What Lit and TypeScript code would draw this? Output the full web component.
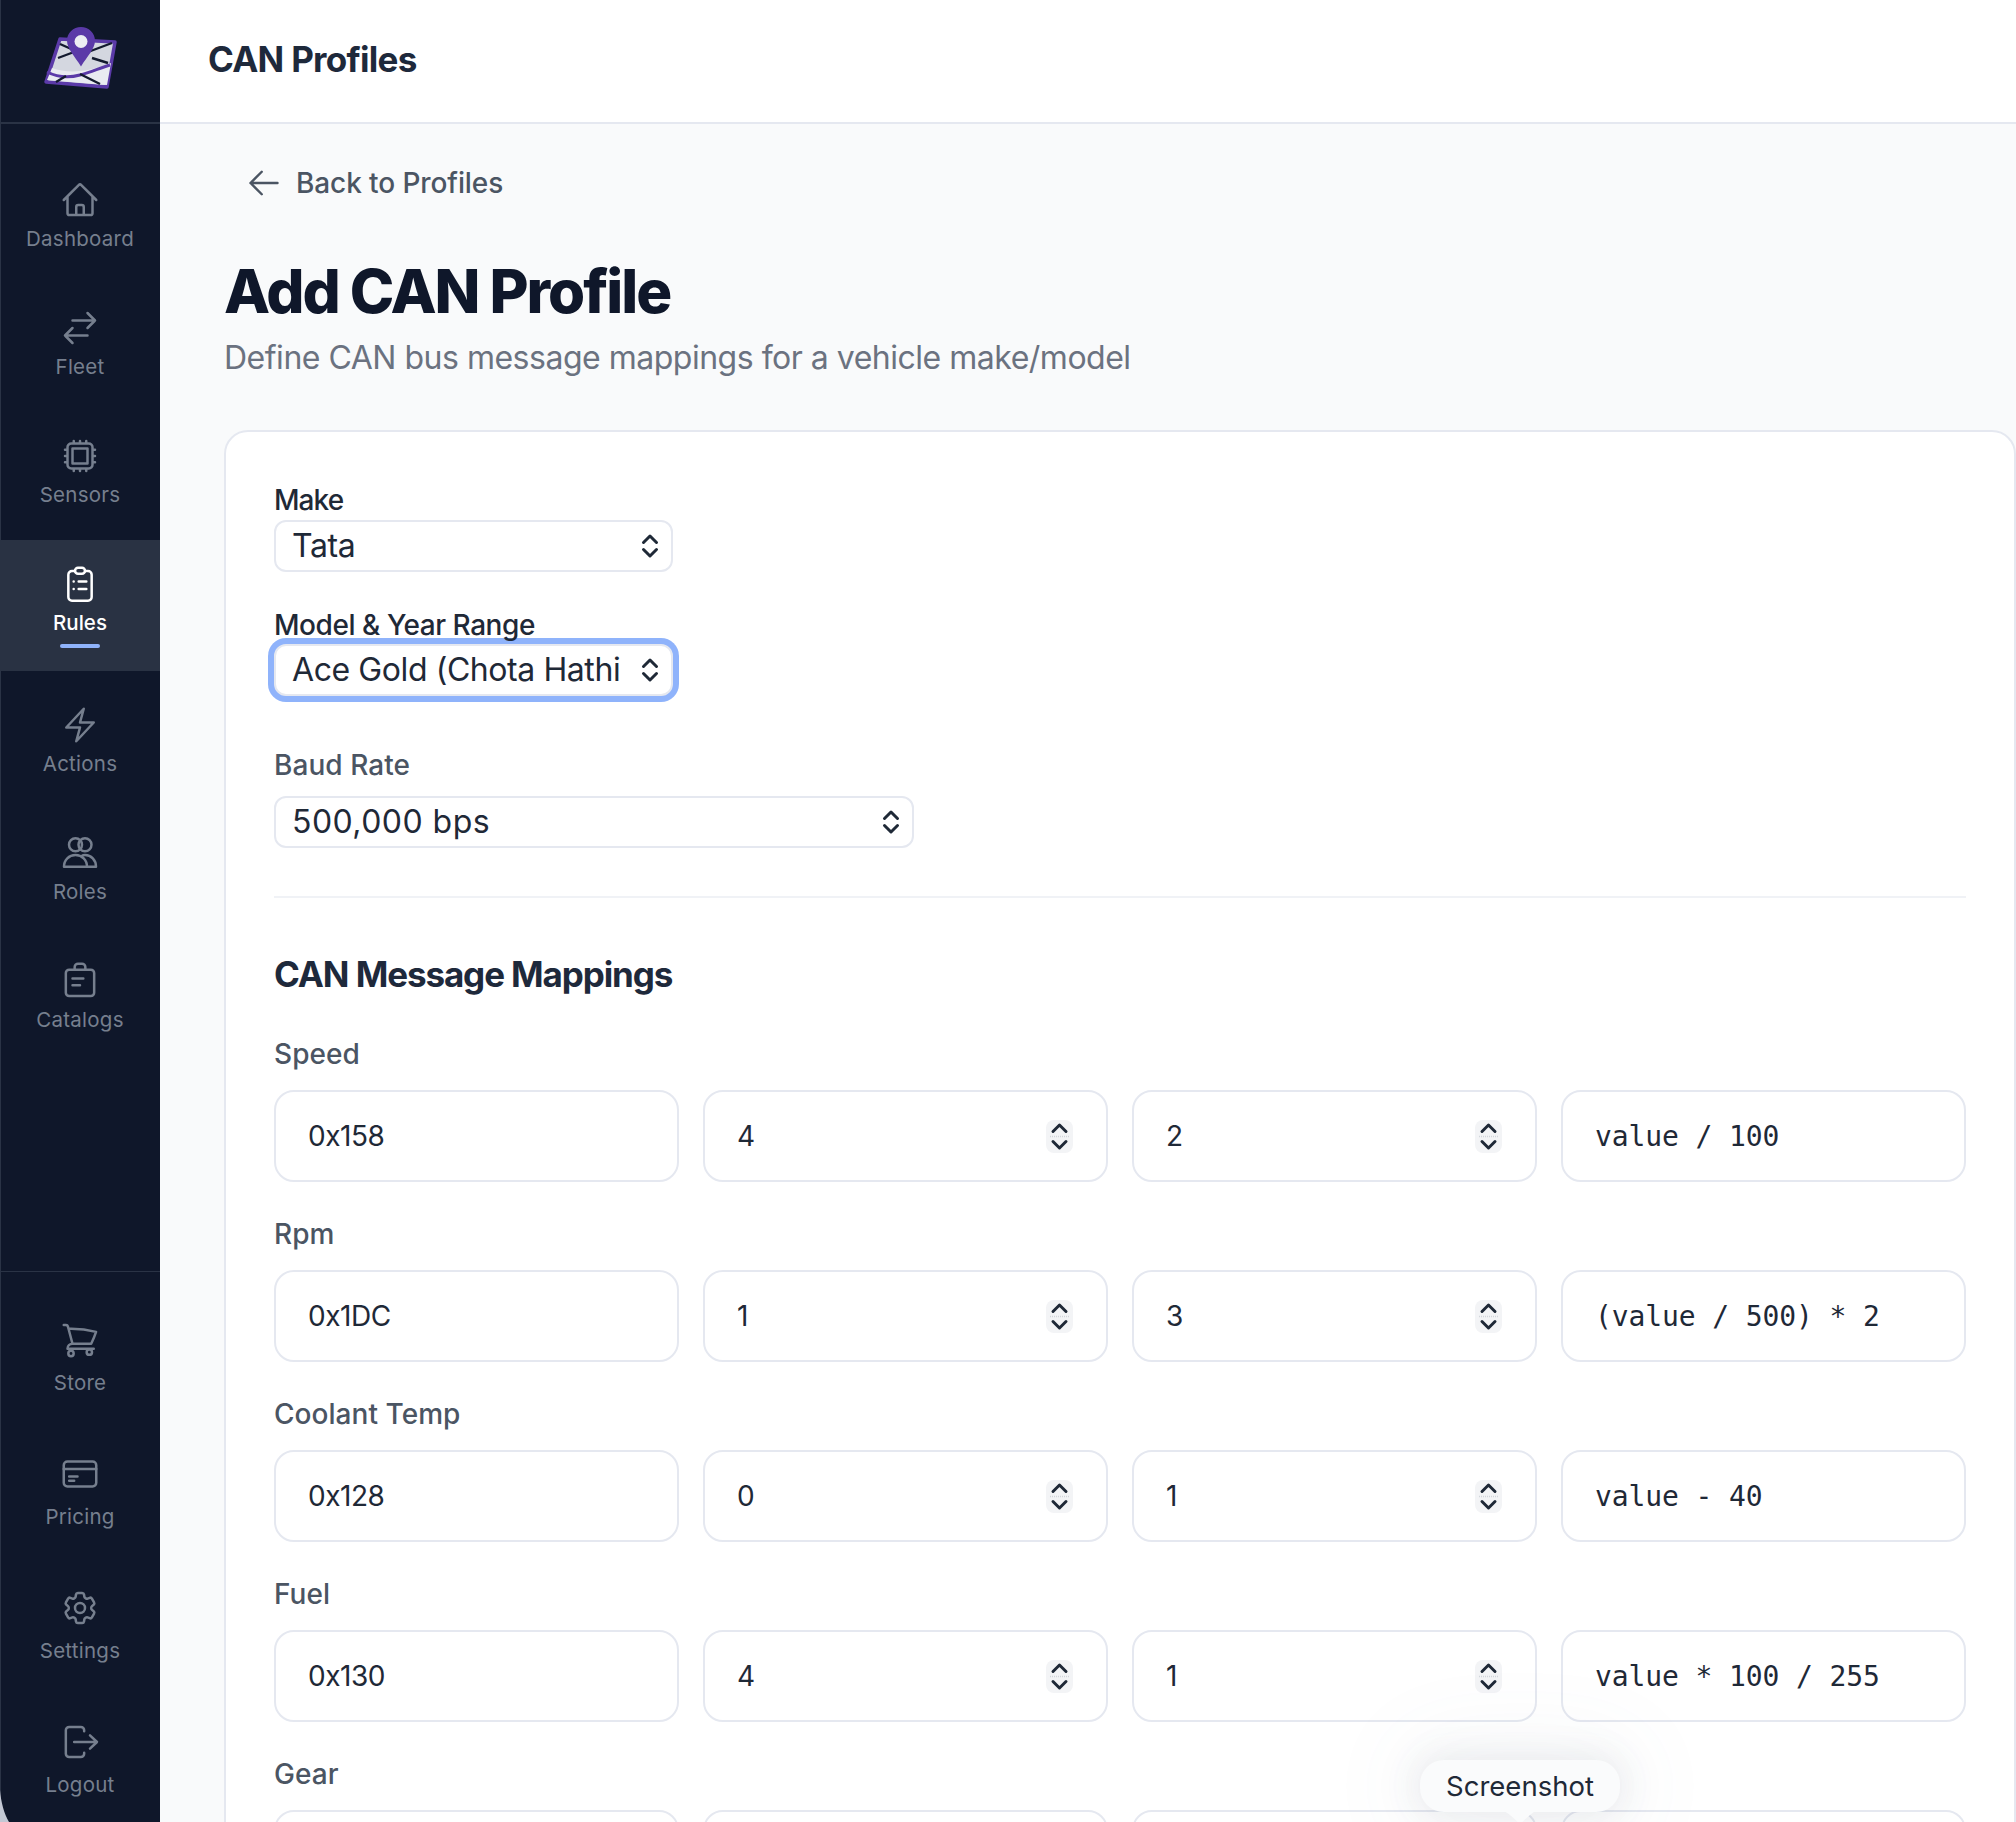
import { LitElement, html, css, svg } from "lit";
import { customElement } from "lit/decorators.js";

const ICONS: Record<string, unknown> = {
  home: svg`<path d="m2.25 12 8.954-8.955c.44-.439 1.152-.439 1.591 0L21.75 12M4.5 9.75v10.125c0 .621.504 1.125 1.125 1.125H9.75v-4.875c0-.621.504-1.125 1.125-1.125h2.25c.621 0 1.125.504 1.125 1.125V21h4.125c.621 0 1.125-.504 1.125-1.125V9.75M8.25 21h8.25"/>`,
  fleet: svg`<path d="M7.5 21 3 16.5m0 0L7.5 12M3 16.5h13.5m0-13.5L21 7.5m0 0L16.5 12M21 7.5H7.5"/>`,
  chip: svg`<path d="M8.25 3v1.5M4.5 8.25H3m18 0h-1.5M4.5 12H3m18 0h-1.5m-15 3.75H3m18 0h-1.5M8.25 19.5V21M12 3v1.5m0 15V21m3.75-18v1.5m0 15V21m-9-1.5h10.5a2.25 2.25 0 0 0 2.25-2.25V6.75a2.25 2.25 0 0 0-2.25-2.25H6.75A2.25 2.25 0 0 0 4.5 6.75v10.5a2.25 2.25 0 0 0 2.25 2.25Zm.75-12h9v9h-9v-9Z"/>`,
  rules: svg`<path d="M9 4.2H7.2A2.2 2.2 0 0 0 5 6.4v13.4A2.2 2.2 0 0 0 7.2 22h9.6a2.2 2.2 0 0 0 2.2-2.2V6.4a2.2 2.2 0 0 0-2.2-2.2H15"/><rect x="9" y="2.25" width="6" height="3.6" rx="1.8"/><path d="M11.2 10.5h4.6M11.2 15h4.6M8.2 10.5h.01M8.2 15h.01"/>`,
  bolt: svg`<path d="m3.75 13.5 10.5-11.25L12 10.5h8.25L9.75 21.75 12 13.5H3.75Z"/>`,
  roles: svg`<circle cx="9.3" cy="7" r="3.9"/><circle cx="15" cy="7" r="3.9"/><path d="M2.4 20.25c0-4.2 3-7 6.9-7s6.9 2.8 6.9 7H2.4Z"/><path d="M13 13.8c.6-.4 1.3-.55 2-.55 3.7 0 6.6 2.8 6.6 7h-5.4"/>`,
  catalog: svg`<path d="M5.5 5.2h13a2 2 0 0 1 2 2v11.8a2 2 0 0 1-2 2h-13a2 2 0 0 1-2-2V7.2a2 2 0 0 1 2-2Z"/><path d="M8.8 5.2V3.600a2 2 0 0 1 2-2h2.400a2 2 0 0 1 2 2v1.600M7.500 10.500h6.500M7.500 14.500h4.500"/>`,
  cart: svg`<path d="M2.25 3h1.386c.51 0 .955.343 1.087.835l.383 1.437M7.5 14.25a3 3 0 0 0-3 3h15.75m-12.75-3h11.218c1.121-2.3 2.1-4.684 2.924-7.138a60.114 60.114 0 0 0-16.536-1.84M7.5 14.25 5.106 5.272"/><circle cx="6.6" cy="20.1" r="1.6"/><circle cx="17.6" cy="19.3" r="1.6"/>`,
  card: svg`<rect x="2.25" y="4.5" width="19.5" height="15" rx="2.2"/><path d="M2.25 9h19.5M5.5 13.5h5M5.5 16h3"/>`,
  gear: svg`<path d="M9.594 3.94c.09-.542.56-.94 1.11-.94h2.593c.55 0 1.02.398 1.11.94l.213 1.281c.063.374.313.686.645.87.074.04.147.083.22.127.325.196.72.257 1.075.124l1.217-.456a1.125 1.125 0 0 1 1.37.49l1.296 2.247a1.125 1.125 0 0 1-.26 1.431l-1.003.827c-.293.241-.438.613-.43.992a7.723 7.723 0 0 1 0 .255c-.008.378.137.75.43.991l1.004.827c.424.35.534.955.26 1.43l-1.298 2.247a1.125 1.125 0 0 1-1.369.491l-1.217-.456c-.355-.133-.75-.072-1.076.124a6.47 6.47 0 0 1-.22.128c-.331.183-.581.495-.644.869l-.213 1.281c-.09.543-.56.94-1.11.94h-2.594c-.55 0-1.019-.398-1.11-.94l-.213-1.281c-.062-.374-.312-.686-.644-.87a6.52 6.52 0 0 1-.22-.127c-.325-.196-.72-.257-1.076-.124l-1.217.456a1.125 1.125 0 0 1-1.369-.49l-1.297-2.247a1.125 1.125 0 0 1 .26-1.431l1.004-.827c.292-.24.437-.613.43-.991a6.932 6.932 0 0 1 0-.255c.007-.38-.138-.751-.43-.992l-1.004-.827a1.125 1.125 0 0 1-.26-1.43l1.297-2.247a1.125 1.125 0 0 1 1.37-.491l1.216.456c.356.133.751.072 1.076-.124.072-.044.146-.086.22-.128.332-.183.582-.495.644-.869l.214-1.28Z"/><path d="M15 12a3 3 0 1 1-6 0 3 3 0 0 1 6 0Z"/>`,
  logout: svg`<path d="M14.5 5.500V5a2 2 0 0 0-2-2H5.500a2 2 0 0 0-2 2v14a2 2 0 0 0 2 2h7a2 2 0 0 0 2-2v-.5M18 8l4.200 4-4.200 4M22 12H8.500"/>`,
};

const TOP = [
  ["home", "Dashboard"], ["fleet", "Fleet"], ["chip", "Sensors"], ["rules", "Rules", true],
  ["bolt", "Actions"], ["roles", "Roles"], ["catalog", "Catalogs"],
] as [string, string, boolean?][];
const BOTTOM = [["cart", "Store"], ["card", "Pricing"], ["gear", "Settings"], ["logout", "Logout"]] as [string, string][];

const ROWS = [
  ["Speed", "0x158", "4", "2", "value / 100"],
  ["Rpm", "0x1DC", "1", "3", "(value / 500) * 2"],
  ["Coolant Temp", "0x128", "0", "1", "value - 40"],
  ["Fuel", "0x130", "4", "1", "value * 100 / 255"],
  ["Gear", "", "", "", ""],
];

@customElement("app-root")
export class AppRoot extends LitElement {
  static styles = css`
    :host { display: flex; height: 100vh; overflow: hidden; position: relative; background: #f9fafb;
      font-family: Inter, "Liberation Sans", sans-serif; color: #1f2937; }
    .side { width: 160px; flex: none; background: #0f172a; display: flex; flex-direction: column; position: relative; box-shadow: inset 1px 0 0 #2a3345; }
    .brand { height: 122px; flex: none; border-bottom: 2px solid #2a3345; display: flex; align-items: center; justify-content: center; }
    .brand svg { width: 160px; height: 122px; display: block; }
    .nav { padding-top: 32px; display: flex; flex-direction: column; gap: 8px; flex: 1; }
    .foot { border-top: 1px solid #2a3345; padding-top: 28px; display: flex; flex-direction: column; gap: 14px; }
    .item { height: 120px; box-sizing: border-box; padding-top: 24px; display: flex; flex-direction: column; align-items: center; color: #767f8e; }
    .foot .item { padding-top: 20px; }
    .foot .item span { margin-top: 7px; }
    .item svg { width: 40px; height: 40px; fill: none; stroke: currentColor; stroke-width: 1.5; stroke-linecap: round; stroke-linejoin: round; display: block; }
    .item span { font-size: 20.5px; line-height: 32px; margin-top: 3px; letter-spacing: 0.25px; white-space: nowrap; }
    .item.on { height: 131px; margin-bottom: 2px; background: #293243; color: #fff; }
    .item.on span { font-weight: 500; letter-spacing: 0; }
    .bar { width: 40px; height: 4px; border-radius: 2px; background: #8fb3fb; margin-top: 5px; }
    .corner { position: absolute; left: 0; bottom: 0; width: 12px; height: 50px; }

    .main { flex: 1; min-width: 0; display: flex; flex-direction: column; }
    .top { height: 122px; flex: none; box-sizing: content-box; background: #fff; border-bottom: 2px solid #e5e8f0; display: flex; align-items: center; padding-left: 48px; }
    .top h2 { margin: 0 0 5px; font-size: 35px; font-weight: 700; letter-spacing: -0.72px; color: #1e293b; }
    .page { padding: 41px 0 0 64px; }
    .back { display: flex; align-items: center; gap: 14px; padding-left: 22px; height: 36px; color: #4b5563; font-size: 28px; font-weight: 550; letter-spacing: -0.1px; }
    .back svg { width: 36px; height: 36px; fill: none; stroke: currentColor; stroke-width: 1.6; stroke-linecap: round; stroke-linejoin: round; }
    h1 { margin: 54px 0 0; font-size: 60px; line-height: 72px; font-weight: 800; letter-spacing: -2.05px; color: #0f172a; }
    .sub { margin: 9px 0 0; font-size: 32px; line-height: 44px; color: #6b7280; letter-spacing: -0.49px; }
    .cardbox { margin-top: 50px; background: #fff; border: 2px solid #e5e8f0; border-radius: 24px; padding: 48px; }
    .lab { font-size: 28px; line-height: 40px; font-weight: 500; color: #1f2937; letter-spacing: -0.45px; }
    .lab.tight { letter-spacing: -0.95px; }
    .lab.mid { color: #4b5563; font-weight: 550; letter-spacing: 0.05px; }
    .sel { box-sizing: border-box; height: 52px; border: 2px solid #e5e8f0; border-radius: 12px; background: #fff; display: flex; align-items: center; justify-content: space-between; padding: 0 12px 0 16px; font-size: 32px; color: #1f2937; letter-spacing: -0.42px; }
    .sel span { margin-bottom: 2px; }
    .sel.small { width: 399px; }
    .sel.focus { box-shadow: 0 0 0 6px #8fb3fb; }
    .sel.wide { width: 640px; }
    .sel.wide span { letter-spacing: 0.45px; }
    .sel svg { width: 18px; height: 26px; flex: none; fill: none; stroke: #1f2937; stroke-width: 3; stroke-linecap: round; stroke-linejoin: round; }
    .g2 { margin-top: 33px; }
    .g2 .sel { margin-top: -1px; }
    .g3 { margin-top: 49px; }
    .g3 .sel { margin-top: 11px; }
    hr { border: 0; height: 2px; background: #f0f2f6; margin: 48px 0 0; }
    h3 { margin: 52px 0 0; font-size: 35px; line-height: 48px; font-weight: 700; letter-spacing: -1.1px; color: #1e293b; }
    .rows { margin-top: 36px; display: flex; flex-direction: column; gap: 32px; }
    .grid { display: grid; grid-template-columns: repeat(4, 1fr); gap: 24px; margin-top: 16px; }
    .inp { box-sizing: border-box; height: 92px; border: 2px solid #e5e8f0; border-radius: 20px; display: flex; align-items: center; justify-content: space-between; padding: 0 33px 0 32px; font-size: 28px; color: #1f2937; letter-spacing: -0.45px; }
    .inp.mono { font-family: "DejaVu Sans Mono", "Liberation Mono", monospace; letter-spacing: -0.1px; font-size: 28px; white-space: pre; }
    .inp svg { width: 27px; height: 33px; flex: none; display: block; }
    .spin-bg { fill: #f3f4f6; }
    .spin-ch { fill: none; stroke: #1f2937; stroke-width: 3; stroke-linecap: round; stroke-linejoin: round; }
    .spin-dv { stroke: #d1d5db; stroke-width: 1.5; stroke-dasharray: 1 1; }

    .tip { position: absolute; left: 1420px; top: 1760px; width: 200px; height: 52px; box-sizing: border-box; border-radius: 24px; background: #fafbfc; display: flex; align-items: center; justify-content: center; font-size: 27.5px; color: #1f2937; box-shadow: 0 0 32px 6px rgba(100,110,130,.1), 0 0 90px 24px rgba(100,110,130,.05); }
    .tail { position: absolute; left: 80px; top: 50px; width: 40px; height: 14px; }
  `;

  private spin() {
    return html`<svg viewBox="0 0 27 33">
      <rect class="spin-bg" width="27" height="33" rx="8"></rect>
      <path class="spin-ch" d="M7 11.5l6.5-6.5 6.5 6.5M7 21.5l6.5 6.5 6.5-6.5"></path>
      <path class="spin-dv" d="M4 16.5h19"></path>
    </svg>`;
  }

  private chev() {
    return html`<svg viewBox="0 0 18 26"><path d="M2.5 9.5 9 3l6.5 6.5M2.5 16.5 9 23l6.5-6.5"></path></svg>`;
  }

  private navItem(icon: string, label: string, on?: boolean) {
    return html`<div class="item ${on ? "on" : ""}">
      <svg viewBox="0 0 24 24">${ICONS[icon]}</svg>
      <span>${label}</span>
      ${on ? html`<div class="bar"></div>` : ""}
    </div>`;
  }

  render() {
    return html`
      <aside class="side">
        <div class="brand">
          <svg viewBox="0 0 160 122">
            <path d="M60 39 115 42 107 87 46 82Z" fill="#d4d7e0" stroke="#5b3aa8" stroke-width="3.5" stroke-linejoin="round"></path>
            <path d="M47 80 52 68c8 3 18 4 28 3 10-.5 20-4 31-8l-4 22Z" fill="#e9ebf1"></path>
            <path d="M47 72c10 5 22 6 33 3 10-2.500 20-7 30-10" fill="none" stroke="#5b3aa8" stroke-width="3"></path>
            <path d="M60 44l18 8M58 58l16-6M88 52l24-9M92 58l16 5M80 74l20 10M66 76l-10 6" stroke="#131a2e" stroke-width="2.400" fill="none"></path>
            <path d="M81 27c-7.700 0-14 6-14 13.500 0 8.500 8 16 14 26 6-10 14-17.500 14-26C95 33 88.700 27 81 27Z" fill="#5b3aa8"></path>
            <circle cx="81" cy="41.500" r="6.500" fill="#eceef3"></circle>
          </svg>
        </div>
        <div class="nav">${TOP.map(([i, l, o]) => this.navItem(i, l, o))}</div>
        <div class="foot">${BOTTOM.map(([i, l]) => this.navItem(i, l))}</div>
        <svg class="corner" viewBox="0 0 12 50"><path d="M0 18C1 30 4 42 9 50H0Z" fill="#c3c8d4"></path></svg>
      </aside>
      <div class="main">
        <header class="top"><h2>CAN Profiles</h2></header>
        <div class="page">
          <div class="back">
            <svg viewBox="0 0 24 24"><path d="M10.500 19.500 3 12m0 0 7.500-7.500M3 12h18"></path></svg>
            <span>Back to Profiles</span>
          </div>
          <h1>Add CAN Profile</h1>
          <p class="sub">Define CAN bus message mappings for a vehicle make/model</p>
          <section class="cardbox">
            <div class="lab tight">Make</div>
            <div class="sel small"><span>Tata</span>${this.chev()}</div>
            <div class="g2">
              <div class="lab">Model &amp; Year Range</div>
              <div class="sel small focus"><span>Ace Gold (Chota Hathi</span>${this.chev()}</div>
            </div>
            <div class="g3">
              <div class="lab mid">Baud Rate</div>
              <div class="sel wide"><span>500,000 bps</span>${this.chev()}</div>
            </div>
            <hr />
            <h3>CAN Message Mappings</h3>
            <div class="rows">
              ${ROWS.map(([name, id, a, b, f]) => html`<div>
                <div class="lab mid">${name}</div>
                <div class="grid">
                  <div class="inp">${id}</div>
                  <div class="inp"><span>${a}</span>${this.spin()}</div>
                  <div class="inp"><span>${b}</span>${this.spin()}</div>
                  <div class="inp mono">${f}</div>
                </div>
              </div>`)}
            </div>
          </section>
        </div>
      </div>
      <div class="tip">Screenshot
        <svg class="tail" viewBox="0 0 40 14"><path d="M0 0h40c-7 1-11 6-20 14C11 6 7 1 0 0Z" fill="#fafbfc"></path></svg>
      </div>
    `;
  }
}
